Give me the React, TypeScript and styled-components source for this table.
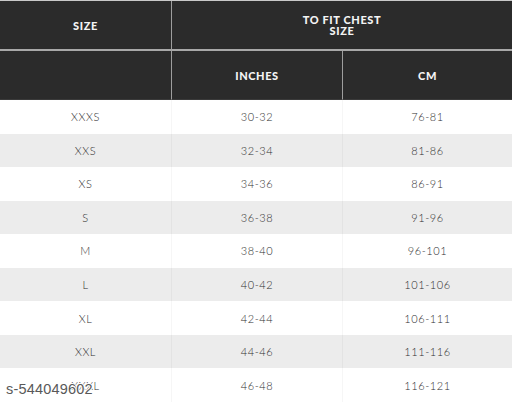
import React from 'react'
import styled, { createGlobalStyle } from 'styled-components'

const GlobalStyle = createGlobalStyle`
  html, body {
    margin: 0;
    padding: 0;
    background: #fff;
  }
`

type SizeRow = { size: string; inches: string; cm: string }

const rows: SizeRow[] = [
  { size: 'XXXS', inches: '30-32', cm: '76-81' },
  { size: 'XXS', inches: '32-34', cm: '81-86' },
  { size: 'XS', inches: '34-36', cm: '86-91' },
  { size: 'S', inches: '36-38', cm: '91-96' },
  { size: 'M', inches: '38-40', cm: '96-101' },
  { size: 'L', inches: '40-42', cm: '101-106' },
  { size: 'XL', inches: '42-44', cm: '106-111' },
  { size: 'XXL', inches: '44-46', cm: '111-116' },
  { size: 'XXXL', inches: '46-48', cm: '116-121' },
]

export default function App() {
  return (
    <>
      <GlobalStyle />
      <Sheet>
        <Head>
          <HeadCell $top>SIZE</HeadCell>
          <HeadCell $top $span={2} $last>
            TO FIT CHEST
            <br />
            SIZE
          </HeadCell>
          <HeadCell />
          <HeadCell>INCHES</HeadCell>
          <HeadCell $last>CM</HeadCell>
        </Head>
        <Body>
          {rows.map((r, i) => (
            <Row key={r.size} $shade={i % 2 === 1}>
              <Cell>{r.size}</Cell>
              <Cell>{r.inches}</Cell>
              <Cell $last>{r.cm}</Cell>
            </Row>
          ))}
        </Body>
        <Watermark>s-544049602</Watermark>
      </Sheet>
    </>
  )
}

const Sheet = styled.div`
  position: relative;
  width: 512px;
  height: 402px;
  overflow: hidden;
  background: #fff;
  border-top: 1px solid #c9c9c9;
  box-sizing: border-box;
`

const Head = styled.div`
  display: grid;
  grid-template-columns: 172px 171px 169px;
  grid-template-rows: 50px 49px;
  background: #2b2b2b;
`

const HeadCell = styled.div<{ $top?: boolean; $span?: number; $last?: boolean }>`
  grid-column: span ${p => p.$span ?? 1};
  display: flex;
  align-items: center;
  justify-content: center;
  text-align: center;
  box-sizing: border-box;
  color: #f4f4f4;
  font-family: Lato, 'Noto Sans', sans-serif;
  font-weight: 900;
  font-size: 11px;
  line-height: 11px;
  letter-spacing: 0.6px;
  border-right: ${p => (p.$last ? 'none' : '1px solid #9e9e9e')};
  border-bottom: ${p => (p.$top ? '2px solid #a8a8a8' : '1px solid #3a3a3a')};
`

const Body = styled.div`
  display: grid;
  grid-template-rows: repeat(9, 1fr);
  height: 302px;
`

const Row = styled.div<{ $shade: boolean }>`
  display: grid;
  grid-template-columns: 172px 171px 169px;
  background: ${p => (p.$shade ? '#ececec' : '#ffffff')};
`

const Cell = styled.div<{ $last?: boolean }>`
  display: flex;
  align-items: center;
  justify-content: center;
  box-sizing: border-box;
  color: #2e2e2e;
  font-family: Lato, 'Noto Sans', sans-serif;
  font-weight: 300;
  font-size: 11px;
  letter-spacing: 0.6px;
  border-right: ${p => (p.$last ? 'none' : '1px solid rgba(0, 0, 0, 0.035)')};
`

const Watermark = styled.div`
  position: absolute;
  left: 6px;
  top: 380px;
  font-family: 'Liberation Sans', Arial, sans-serif;
  font-size: 14.5px;
  letter-spacing: 0.2px;
  color: #595959;
  text-shadow:
    1px 0 0 #fff,
    -1px 0 0 #fff,
    0 1px 0 #fff,
    0 -1px 0 #fff;
`
